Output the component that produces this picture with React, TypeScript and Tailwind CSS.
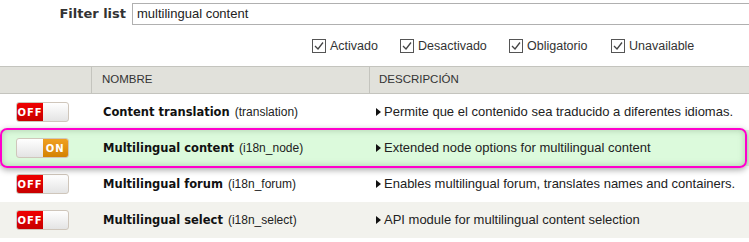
import React from "react";

const bold = { fontFamily: '"DejaVu Sans", Verdana, sans-serif' };
const reg = { fontFamily: '"Liberation Sans", Arial, sans-serif' };

function Toggle({ on }: { on: boolean }) {
  return (
    <div
      className="flex h-[20px] w-[53px] overflow-hidden rounded-[3px] border border-[#cfc6bb] bg-gradient-to-b from-[#ffffff] to-[#e4e4e4]"
      style={bold}
    >
      {on ? (
        <>
          <div className="w-[26px]" />
          <div className="flex w-[26px] items-center justify-center bg-gradient-to-b from-[#f0a020] to-[#d48200] text-[10px] font-bold tracking-[1px] text-white">
            ON
          </div>
        </>
      ) : (
        <>
          <div className="flex w-[26px] items-center justify-center bg-gradient-to-b from-[#f00000] to-[#c80000] text-[10px] font-bold tracking-[1px] text-white">
            OFF
          </div>
          <div className="flex-1" />
        </>
      )}
    </div>
  );
}

function Check({ label, w }: { label: string; w: string }) {
  return (
    <div className={`flex items-center gap-[4px] ${w}`}>
      <svg width="14" height="14" viewBox="0 0 14 14">
        <rect x="0.5" y="0.5" width="13" height="13" fill="#fff" stroke="#555" />
        <path d="M3 7 L6 10 L11 3.5" fill="none" stroke="#444" strokeWidth="1.3" />
      </svg>
      <span className="text-[12.5px] text-[#333]" style={reg}>
        {label}
      </span>
    </div>
  );
}

function Arrow() {
  return (
    <svg width="5" height="8" viewBox="0 0 5 8" className="mr-[3px] shrink-0">
      <path d="M0 0 L5 4 L0 8 Z" fill="#111" />
    </svg>
  );
}

function Row({
  on,
  name,
  machine,
  desc,
  bg,
}: {
  on: boolean;
  name: string;
  machine: string;
  desc: string;
  bg: string;
}) {
  return (
    <div className={`grid h-[36px] grid-cols-[92px_278px_1fr] items-center ${bg}`}>
      <div className="pl-[16px]">
        <Toggle on={on} />
      </div>
      <div className="flex items-baseline pl-[11px] text-[#111]">
        <span className="text-[11.5px] font-bold" style={bold}>
          {name}
        </span>
        <span className="ml-[5px] text-[12px] text-[#222]" style={reg}>
          ({machine})
        </span>
      </div>
      <div className="flex items-center whitespace-nowrap pl-[6px] text-[13px] text-[#222]" style={reg}>
        <Arrow />
        <span>{desc}</span>
      </div>
    </div>
  );
}

export default function App() {
  return (
    <div className="h-[242px] w-[749px] overflow-hidden bg-white" style={reg}>
      <div className="flex h-[28px] items-center">
        <div className="w-[126px] text-right text-[13px] font-bold text-[#333]" style={bold}>
          Filter list
        </div>
        <div className="-mr-[4px] ml-[6px] flex h-[22px] flex-1 items-center border border-[#b0b0b0] pl-[4px] text-[13px] text-[#222]">
          multilingual content
        </div>
      </div>
      <div className="flex h-[32px] items-center pl-[312px] pt-[4px]">
        <Check label="Activado" w="w-[88px]" />
        <Check label="Desactivado" w="w-[109px]" />
        <Check label="Obligatorio" w="w-[102px]" />
        <Check label="Unavailable" w="w-[100px]" />
      </div>
      <div className="mt-[6px] grid h-[28px] grid-cols-[92px_278px_1fr] border-y border-[#c4c4be] bg-[#e1e1db] text-[11.5px] text-[#333]">
        <div className="border-r border-[#c4c4be]" />
        <div className="flex items-center border-r border-[#c4c4be] pl-[10px]">NOMBRE</div>
        <div className="flex items-center pl-[9px]">DESCRIPCIÓN</div>
      </div>
      <Row
        on={false}
        name="Content translation"
        machine="translation"
        desc="Permite que el contenido sea traducido a diferentes idiomas."
        bg="bg-white"
      />
      <div className="relative">
        <Row
          on={true}
          name="Multilingual content"
          machine="i18n_node"
          desc="Extended node options for multilingual content"
          bg="bg-[#dcfadc]"
        />
        <div className="pointer-events-none absolute bottom-[-2px] left-0 right-[2px] top-[-2px] rounded-[7px] border-2 border-[#ff00cc] shadow-[0_2px_6px_rgba(0,0,0,0.35),inset_0_0_6px_rgba(120,160,120,0.5)]" />
      </div>
      <Row
        on={false}
        name="Multilingual forum"
        machine="i18n_forum"
        desc="Enables multilingual forum, translates names and containers."
        bg="bg-white"
      />
      <Row
        on={false}
        name="Multilingual select"
        machine="i18n_select"
        desc="API module for multilingual content selection"
        bg="bg-[#f2f2ed]"
      />
    </div>
  );
}
